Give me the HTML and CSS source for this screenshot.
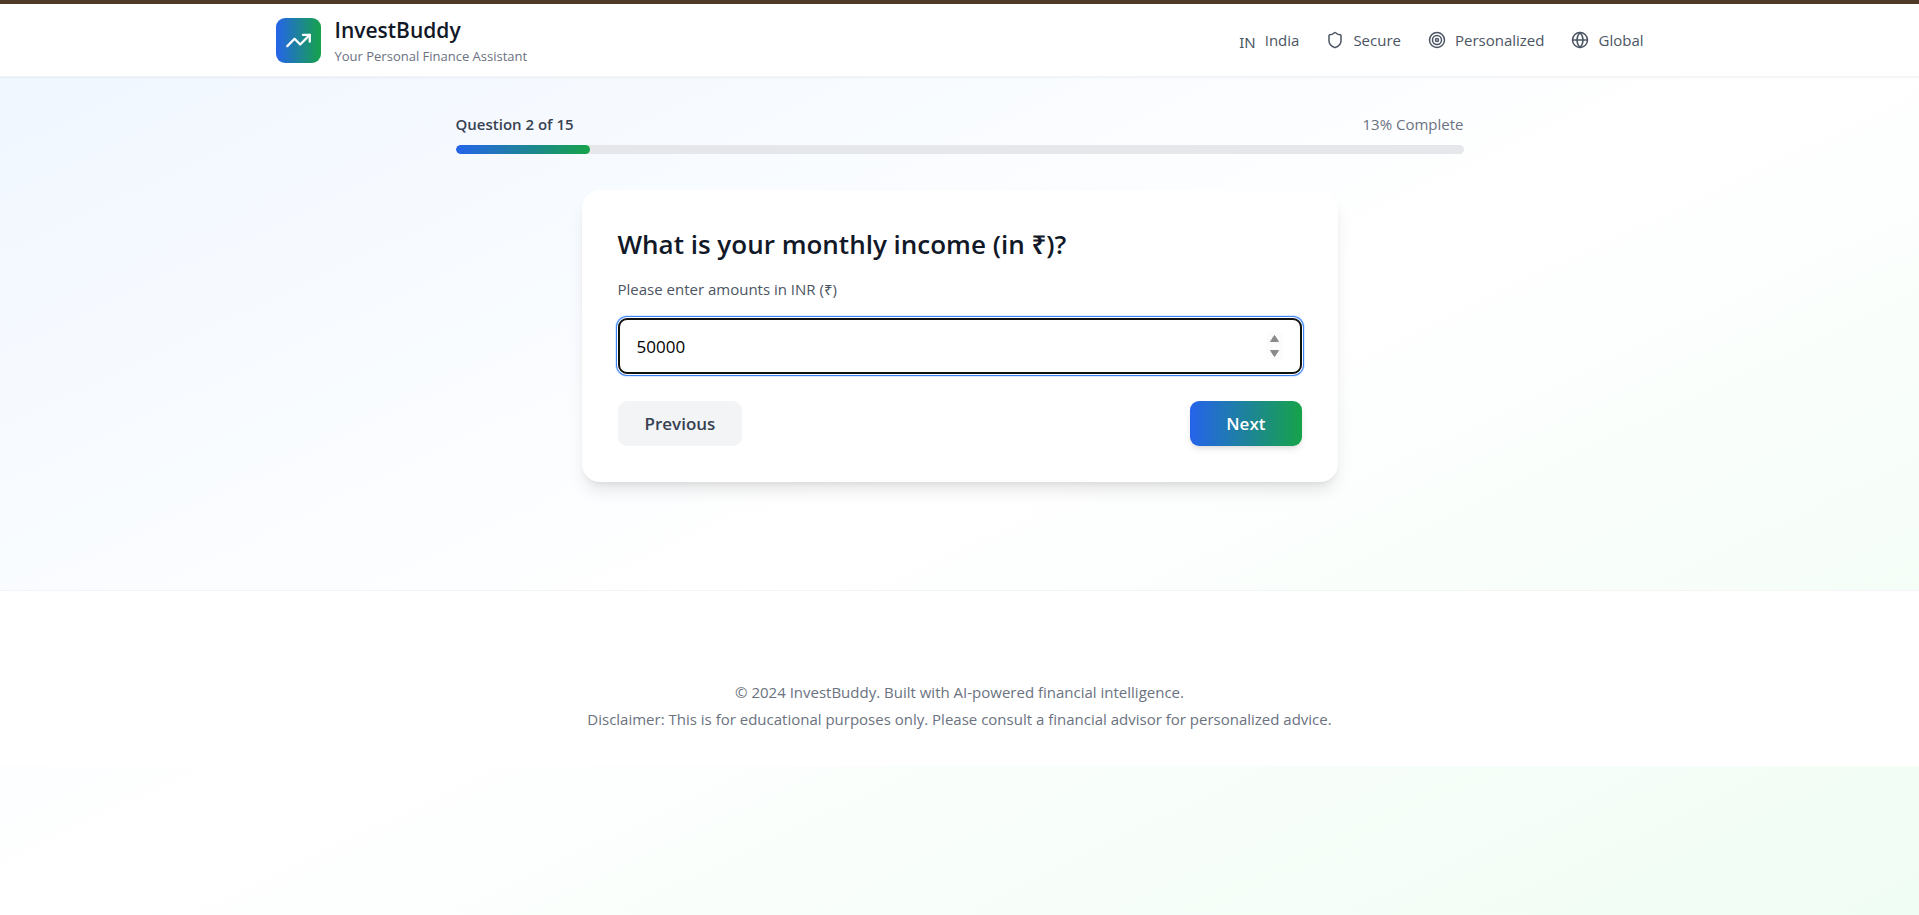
FILE: index.html
```
<!DOCTYPE html>
<html lang="en">
<head>
  <meta charset="UTF-8" />
  <meta name="viewport" content="width=device-width, initial-scale=1.0" />
  <title>InvestBuddy - Your Personal Finance Assistant</title>
  <link rel="stylesheet" href="styles.css">
</head>
<body>

  <header class="header">
    <div class="header-inner">
      <div class="brand">
        <div class="logo">
          <svg viewBox="0 0 24 24" class="icon icon-lg" aria-hidden="true">
            <polyline points="22 7 13.5 15.5 8.5 10.5 2 17" />
            <polyline points="16 7 22 7 22 13" />
          </svg>
        </div>
        <div>
          <h1 class="brand-name">InvestBuddy</h1>
          <p class="brand-tagline">Your Personal Finance Assistant</p>
        </div>
      </div>
      <div class="features">
        <div class="feature">
          <span class="flag">IN</span>
          <span>India</span>
        </div>
        <div class="feature">
          <svg viewBox="0 0 24 24" class="icon" aria-hidden="true">
            <path d="M20 13c0 5-3.5 7.5-7.66 8.95a1 1 0 0 1-.67-.01C7.5 20.5 4 18 4 13V6a1 1 0 0 1 1-1c2 0 4.5-1.2 6.24-2.72a1.17 1.17 0 0 1 1.52 0C14.51 3.81 17 5 19 5a1 1 0 0 1 1 1z" />
          </svg>
          <span>Secure</span>
        </div>
        <div class="feature">
          <svg viewBox="0 0 24 24" class="icon" aria-hidden="true">
            <circle cx="12" cy="12" r="10" />
            <circle cx="12" cy="12" r="6" />
            <circle cx="12" cy="12" r="2" />
          </svg>
          <span>Personalized</span>
        </div>
        <div class="feature">
          <svg viewBox="0 0 24 24" class="icon" aria-hidden="true">
            <circle cx="12" cy="12" r="10" />
            <path d="M12 2a14.5 14.5 0 0 0 0 20 14.5 14.5 0 0 0 0-20" />
            <path d="M2 12h20" />
          </svg>
          <span>Global</span>
        </div>
      </div>
    </div>
  </header>

  <main class="main">
    <div class="progress">
      <div class="progress-labels">
        <span class="progress-step">Question 2 of 15</span>
        <span class="progress-percent">13% Complete</span>
      </div>
      <div class="progress-track">
        <div class="progress-bar" style="width: 13.33%"></div>
      </div>
    </div>

    <form class="card">
      <h2 class="question"><label for="income">What is your monthly income (in ₹)?</label></h2>
      <p class="hint" id="incomeHint">Please enter amounts in INR (₹)</p>
      <input class="answer" type="number" id="income" value="50000" min="0" aria-describedby="incomeHint" />
      <div class="actions">
        <button type="button" class="btn btn-prev">Previous</button>
        <button type="button" class="btn btn-next">Next</button>
      </div>
    </form>
  </main>

  <footer class="footer">
    <p>© 2024 InvestBuddy. Built with AI-powered financial intelligence.</p>
    <p>Disclaimer: This is for educational purposes only. Please consult a financial advisor for personalized advice.</p>
  </footer>

</body>
</html>
```

FILE: styles.css
```
* {
  box-sizing: border-box;
}
body {
  margin: 0;
  min-height: 100vh;
  border-top: 4px solid #4f3a28;
  background: linear-gradient(to bottom right, #eff6ff, #ffffff, #f0fdf4);
  font-family: "Open Sans", "Noto Sans", sans-serif;
  font-size: 15px;
  line-height: 22px;
  color: #111827;
}
h1, h2, p {
  margin: 0;
}

/* Header */
.header {
  background: #ffffff;
  border-bottom: 1px solid #f3f4f6;
  box-shadow: 0 1px 2px rgba(0, 0, 0, 0.05);
}
.header-inner {
  display: flex;
  align-items: center;
  justify-content: space-between;
  max-width: 1440px;
  margin: 0 auto;
  padding: 10px 36px;
}
.brand {
  display: flex;
  align-items: center;
  gap: 14px;
}
.logo {
  display: flex;
  align-items: center;
  justify-content: center;
  width: 45px;
  height: 45px;
  border-radius: 9px;
  background: linear-gradient(to right, #2563eb, #16a34a);
  color: #ffffff;
}
.icon {
  width: 18px;
  height: 18px;
  fill: none;
  stroke: currentColor;
  stroke-width: 2;
  stroke-linecap: round;
  stroke-linejoin: round;
}
.icon-lg {
  width: 27px;
  height: 27px;
}
.brand-name {
  font-size: 21px;
  line-height: 32px;
  font-weight: 600;
}
.brand-tagline {
  font-size: 13px;
  line-height: 20px;
  color: #6b7280;
}
.features {
  display: flex;
  gap: 27px;
  color: #4b5563;
}
.feature {
  display: flex;
  align-items: center;
  gap: 9px;
}
.flag {
  padding-top: 4px;
  font-family: "Noto Sans", sans-serif;
  font-size: 15px;
}

/* Progress */
.main {
  padding: 36px 36px 108px;
}
.progress {
  max-width: 1008px;
  margin: 0 auto 36px;
}
.progress-labels {
  display: flex;
  justify-content: space-between;
  margin-bottom: 10px;
}
.progress-step {
  font-weight: 600;
  color: #374151;
}
.progress-percent {
  color: #6b7280;
}
.progress-track {
  height: 9px;
  border-radius: 9px;
  background: #e5e7eb;
  overflow: hidden;
}
.progress-bar {
  height: 100%;
  border-radius: 9px;
  background: linear-gradient(to right, #2563eb, #16a34a);
}

/* Question card */
.card {
  max-width: 756px;
  margin: 0 auto;
  padding: 36px;
  border-radius: 18px;
  background: #ffffff;
  box-shadow: 0 11px 17px -3px rgba(0, 0, 0, 0.1), 0 4px 7px -4px rgba(0, 0, 0, 0.1);
}
.question {
  margin-bottom: 16px;
  font-size: 26px;
  line-height: 36px;
  font-weight: 600;
}
.hint {
  margin-bottom: 18px;
  color: #4b5563;
}
.answer {
  display: block;
  width: 100%;
  height: 56px;
  margin-bottom: 27px;
  padding: 0 17px;
  border: 2px solid #101010;
  border-radius: 9px;
  box-shadow: 0 0 0 1px #ffffff, 0 0 0 2px #3b82f6, 0 0 0 3px #dbeafe;
  background: #ffffff;
  font-family: inherit;
  font-size: 17px;
  color: #000000;
  outline: none;
}
.answer::-webkit-inner-spin-button {
  -webkit-appearance: none;
  width: 17px;
  height: 26px;
  opacity: 1;
  background: #fcfcfc url("data:image/svg+xml,%3Csvg xmlns='http://www.w3.org/2000/svg' width='17' height='26' fill='%238b8b8b' stroke='%238b8b8b' stroke-linejoin='round'%3E%3Cpath d='M4.500 8.500L8.500 2.500L12.500 8.500Z M4.500 17.500L8.500 23.500L12.500 17.500Z'/%3E%3C/svg%3E") no-repeat center;
}
.actions {
  display: flex;
  justify-content: space-between;
}
.btn {
  height: 45px;
  border: none;
  border-radius: 9px;
  font-family: inherit;
  font-size: 17px;
  font-weight: 600;
  cursor: pointer;
}
.btn-prev {
  padding: 0 27px;
  background: #f3f4f6;
  color: #374151;
}
.btn-next {
  padding: 0 36px;
  background: linear-gradient(to right, #2563eb, #16a34a);
  box-shadow: 0 4px 7px -1px rgba(0, 0, 0, 0.1), 0 2px 4px -2px rgba(0, 0, 0, 0.1);
  color: #ffffff;
}

/* Footer */
.footer {
  padding: 88px 36px 33px;
  border-top: 1px solid #f3f4f6;
  background: #ffffff;
  text-align: center;
  line-height: 27px;
  color: #6b7280;
}

@media (max-width: 800px) {
  .header-inner {
    flex-wrap: wrap;
    gap: 14px;
  }
  .features {
    flex-wrap: wrap;
  }
}
```
